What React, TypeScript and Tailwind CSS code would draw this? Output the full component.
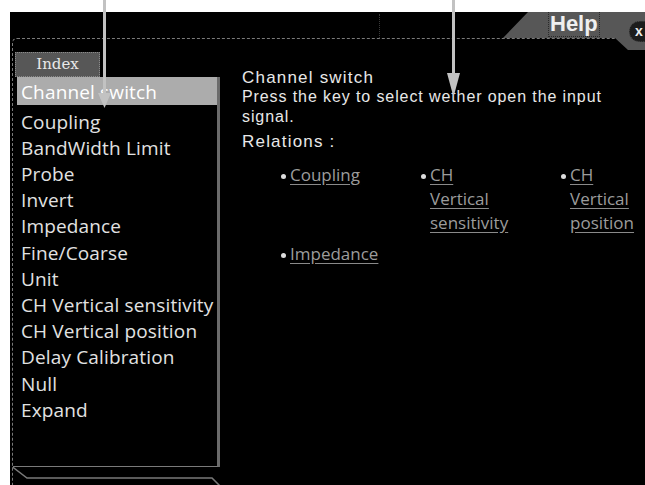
import React from 'react';

const INDEX_ITEMS = [
  'Coupling',
  'BandWidth Limit',
  'Probe',
  'Invert',
  'Impedance',
  'Fine/Coarse',
  'Unit',
  'CH Vertical sensitivity',
  'CH Vertical position',
  'Delay Calibration',
  'Null',
  'Expand',
];

const RELATIONS = ['Coupling', 'CH Vertical sensitivity', 'CH Vertical position', 'Impedance'];

const Relation: React.FC<{ label: string }> = ({ label }) => (
  <div className="flex items-start">
    <div className="mt-[11px] w-[5px] h-[5px] rounded-full bg-[#dcdcdc] shrink-0" />
    <span className="ml-[4px] w-[82px] text-[17px] leading-[24px] text-[#9c9c9c] underline underline-offset-[3px] decoration-[#8a8a8a]">
      {label}
    </span>
  </div>
);

export default function App() {
  return (
    <div className="relative w-[645px] h-[485px] overflow-hidden bg-white font-['Open_Sans',sans-serif]">
      <div className="h-full pt-[12px] pl-[10px]">
        <div className="h-full bg-black flex flex-col">
          {/* header strip */}
          <div className="h-[26px] flex shrink-0">
            <div className="flex-1">
              <div className="ml-[369px] mt-[2px] h-[24px] w-0 border-l border-dotted border-[#3a3a3a]" />
            </div>
            <div className="relative z-10 w-[142px] h-[38px] mb-[-12px] bg-[#575757] [clip-path:polygon(0_26px,25px_0,100%_0,100%_38px,125px_38px,112px_26px)]">
              <span className="ml-[46px] inline-block leading-[24px] px-[1px] font-['Liberation_Sans',sans-serif] font-bold text-[22px] text-[#efefef] outline outline-1 outline-dotted outline-[#2a2a2a]">
                Help
              </span>
              <div className="absolute left-[126px] top-[9px] w-[24px] h-[21px] rounded-full bg-[#1c1c1c] border border-dotted border-[#444] font-['Liberation_Sans',sans-serif] font-bold text-[14px] leading-[18px] text-[#eee] pl-[5px]">
                x
              </div>
            </div>
          </div>

          {/* body */}
          <div className="flex-1 flex">
            <div className="ml-[2px] flex-1 flex border-l border-t border-dashed border-[#7a7a7a] rounded-tl-[5px]">
              {/* index column */}
              <div className="relative w-[207px] flex flex-col pt-[13px]">
                <div className="ml-[2px] w-[85px] h-[25px] bg-[#575757] border border-dotted border-[#8a8a8a] flex items-center justify-center font-['DejaVu_Serif',serif] text-[15px] text-[#e8e8e8]">
                  Index
                </div>
                <div className="h-[390px] border-r-[3px] border-b border-r-[#6b6b6b] border-b-[#7a7a7a] text-[19px] leading-[26.2px] text-[#e2e2e2] tracking-[0.15px]">
                  <div className="ml-[4px] h-[28px] pt-[1.5px] pl-[4px] bg-[#acacac] text-white">Channel switch</div>
                  <div className="pt-[3.5px] pl-[8px]">
                    {INDEX_ITEMS.map((item) => (
                      <div key={item} className="whitespace-nowrap">{item}</div>
                    ))}
                  </div>
                </div>
                <svg className="absolute left-[-1px] top-[428px]" width="212" height="20" viewBox="0 0 212 20">
                  <path d="M0.5 0 L15 11 L200 11 L208 19" fill="none" stroke="#7a7a7a" strokeWidth="1.5" />
                </svg>
              </div>

              {/* help content */}
              <div className="flex-1 pl-[22px] pt-[30px] font-['Liberation_Sans',sans-serif] text-[#e8e8e8]">
                <div className="text-[17px] leading-[18px] tracking-[1.2px]">Channel switch</div>
                <p className="w-[380px] text-[16px] leading-[20px] tracking-[0.9px]">
                  Press the key to select wether open the input signal.
                </p>
                <div className="mt-[5px] text-[17px] leading-[20px] tracking-[1.2px]">Relations :</div>
                <div className="ml-[39px] mt-[11px] grid grid-cols-[140px_140px_140px] gap-y-[7px] font-['Open_Sans',sans-serif]">
                  {RELATIONS.map((r) => (
                    <Relation key={r} label={r} />
                  ))}
                </div>
              </div>
            </div>
          </div>
        </div>
      </div>

      {/* annotation arrows */}
      <svg className="absolute inset-0 pointer-events-none" width="645" height="485" viewBox="0 0 645 485">
        <line x1="104.5" y1="0" x2="104.5" y2="96" stroke="#c2c2c2" strokeWidth="3" />
        <polygon points="98,93 111,93 104.5,108" fill="#c2c2c2" />
        <line x1="453.5" y1="0" x2="453.5" y2="76" stroke="#c2c2c2" strokeWidth="3" />
        <polygon points="447,73 460,73 453.5,97" fill="#c2c2c2" />
      </svg>
    </div>
  );
}
